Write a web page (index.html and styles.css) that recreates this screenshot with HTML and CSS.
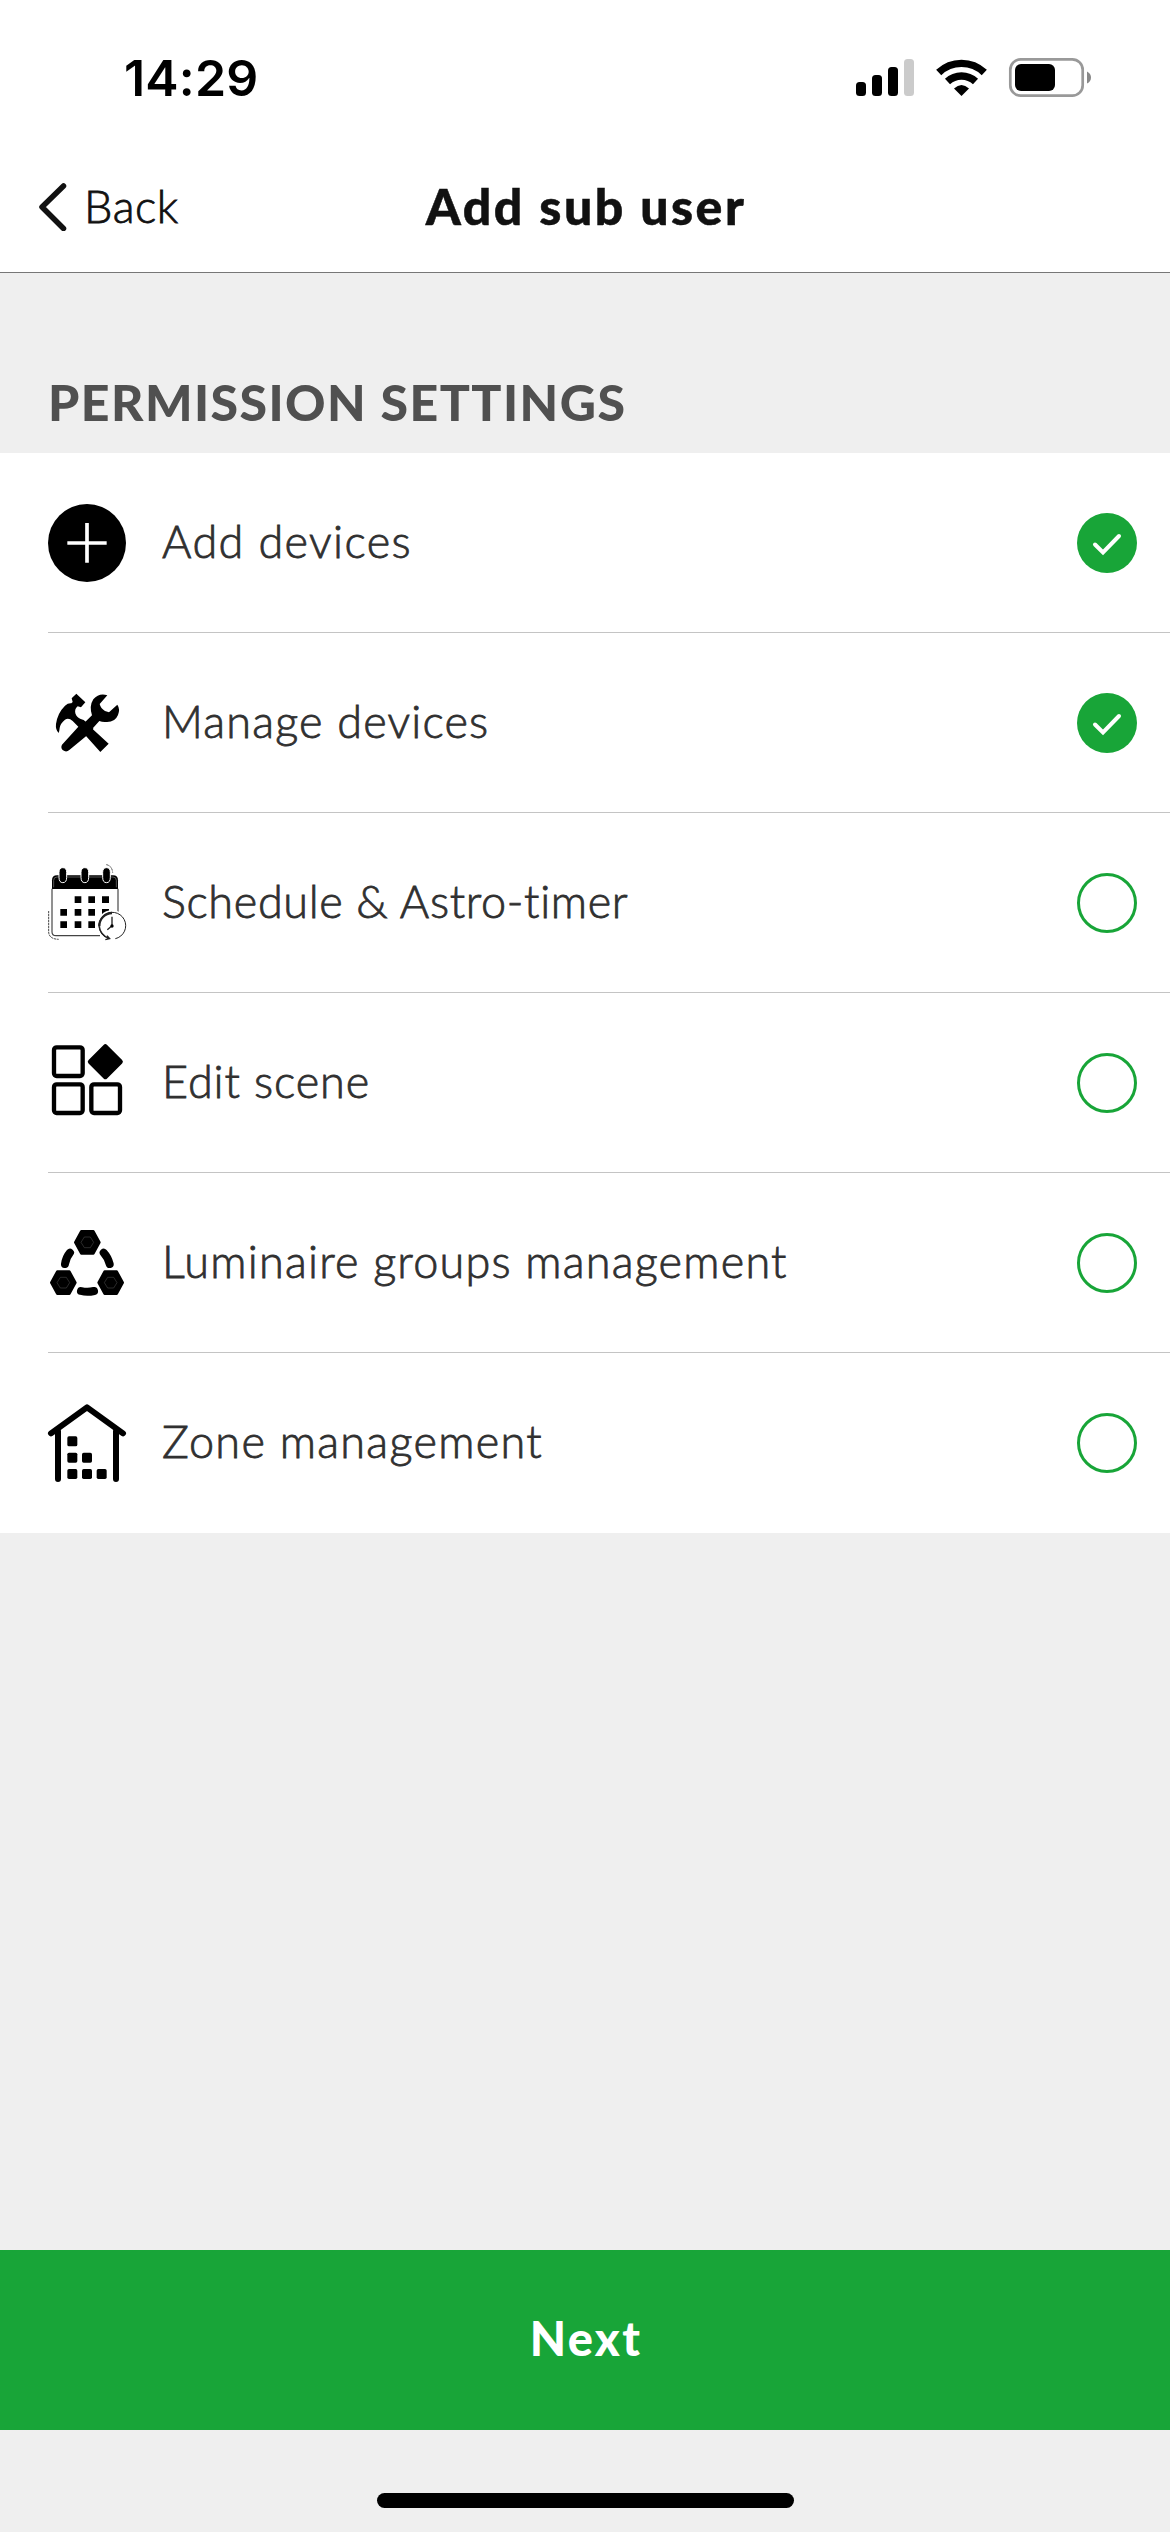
FILE: index.html
```html
<!DOCTYPE html>
<html lang="en">
<head>
<meta charset="utf-8">
<title>Add sub user</title>
<link rel="stylesheet" href="styles.css">
</head>
<body>
<div class="screen">
  <div class="status">
    <span class="time">14:29</span>
    <svg class="indicators" viewBox="0 0 240 42">
      <rect x="0" y="25" width="10" height="14" rx="3.5"/>
      <rect x="16" y="18" width="10" height="21" rx="3.5"/>
      <rect x="32" y="10" width="10" height="29" rx="3.5"/>
      <rect x="48" y="2" width="10" height="37" rx="3.5" fill="#cbcbcb"/>
      <g fill="none" stroke="#000" stroke-width="7.4">
        <path d="M82.700 15.500A33 33 0 0 1 128.300 15.500"/>
        <path d="M91.500 24.500A20.500 20.500 0 0 1 119.500 24.500"/>
      </g>
      <path d="M98 31.500Q105.500 24.500 113 31.500L105.500 39Z"/>
      <rect x="154.300" y="2.300" width="72.400" height="36.400" rx="10.500" fill="none" stroke="#999" stroke-width="2.700"/>
      <rect x="159" y="7" width="40" height="27" rx="6"/>
      <path d="M231 14.500Q235 16.500 235 20.500T231 26.500Z" fill="#888"/>
    </svg>
  </div>

  <header class="nav">
    <a class="back">
      <svg class="chevron" viewBox="0 0 28 48"><path d="M24.500 3L3 24L24.500 45.500"/></svg>
      <span class="back-label">Back</span>
    </a>
    <h1 class="title">Add sub user</h1>
  </header>

  <main class="content">
    <h2 class="section">PERMISSION SETTINGS</h2>
    <ul class="list">
      <li class="row">
        <svg class="icon" viewBox="54 42 234 234">
          <circle cx="171" cy="159" r="117"/>
          <path d="M171 99V218M112 159H230" stroke="#fff" stroke-width="11"/>
        </svg>
        <div class="cell"><span class="label add">Add devices</span>
          <svg class="check" viewBox="0 0 60 60"><circle cx="30" cy="30" r="30"/><path d="M18 31.500L26 39.500L42 23"/></svg></div>
      </li>
      <li class="row">
        <svg class="icon" viewBox="54 42 234 234">
          <path d="M139 71L166 97L153 112L143 109Q133 117 136 130Q140 143 152 147L161 150L190 175L188 182L118 240Q109 248 99 241Q91 234 96 224L145 170L128 153Q116 142 105 149Q91 160 89 174Q88 184 86 189Q76 179 78 162Q82 130 105 107Q114 99 124 100L128 96L125 85Z"/>
          <path d="M232 76L209 102Q212 115 225 123L237 127L262 104Q271 117 264 135Q255 157 229 156Q217 157 208 153L187 176L236 221L211 246L168 198L151 170L186 136Q177 108 190 88Q207 68 232 76Z"/>
        </svg>
        <div class="cell"><span class="label manage">Manage devices</span>
          <svg class="check" viewBox="0 0 60 60"><circle cx="30" cy="30" r="30"/><path d="M18 31.500L26 39.500L42 23"/></svg></div>
      </li>
      <li class="row">
        <svg class="icon" viewBox="54 42 234 234">
          <path d="M66 117V91Q66 76 81 76H249Q264 76 264 91V117Z"/>
          <path d="M71 112V91Q71 81 81 81H249Q259 81 259 91V112" fill="none" stroke="#aaa" stroke-width="1.500"/>
          <path d="M66 116V246Q66 257 78 257H210M264 116V186" fill="none" stroke="#444" stroke-width="3.500"/>
          <g stroke="#fff" stroke-width="3">
            <path d="M87 67Q87 53 98.500 53T110 67V82Q110 98 98.500 98T87 82Z"/>
            <path d="M153 67Q153 53 164.500 53T176 67V82Q176 98 164.500 98T153 82Z"/>
            <path d="M218 67Q218 53 229.500 53T241 67V82Q241 98 229.500 98T218 82Z"/>
          </g>
          <path d="M134 139h20v20h-20zM175 139h20v20h-20zM216 139h21v20h-21zM91 177h20v20H91zM134 177h20v20h-20zM175 177h20v20h-20zM216 177h21v20h-21zM91 214h20v20H91zM134 214h20v20h-20zM175 214h20v20h-20z"/>
          <g fill="none" stroke="#222" stroke-width="2.500">
            <path d="M56 183V246Q57 267 86 268" stroke-dasharray="7 2"/>
            <path d="M229 44Q246 47 248 68" stroke-dasharray="7 3"/>
          </g>
          <circle cx="246" cy="227" r="46" fill="#fff"/>
          <g fill="none" stroke="#222">
            <path d="M256 266A40 40 0 1 0 226 261" stroke-width="3"/>
            <path d="M246 189A39 39 0 0 0 208 229" stroke-width="7"/>
            <path d="M208 229Q210 253 237 266M226 269L239 266L231 257" stroke-width="4"/>
            <path d="M246 200V227L232 239" stroke-width="4"/>
          </g>
          <circle cx="246" cy="228" r="5"/>
        </svg>
        <div class="cell"><span class="label schedule">Schedule &amp; Astro-timer</span><span class="radio"></span></div>
      </li>
      <li class="row">
        <svg class="icon" viewBox="54 42 234 234">
          <g fill="none" stroke="#000" stroke-width="13">
            <rect x="72" y="52" width="86" height="86" rx="8"/>
            <rect x="72" y="163" width="86" height="86" rx="8"/>
            <rect x="184" y="163" width="86" height="86" rx="8"/>
          </g>
          <path d="M226 50L271 95L226 140L181 95Z" stroke="#000" stroke-width="15" stroke-linejoin="round"/>
        </svg>
        <div class="cell"><span class="label edit">Edit scene</span><span class="radio"></span></div>
      </li>
      <li class="row">
        <svg class="icon" viewBox="54 42 234 234">
          <g stroke="#000" stroke-width="8" stroke-linejoin="round">
            <path d="M154 64H190L208 97L190 130H154L136 97Z"/>
            <path d="M82 185H118L136 218L118 251H82L64 218Z"/>
            <path d="M224 185H260L278 218L260 251H224L206 218Z"/>
          </g>
          <g fill="none" stroke="#555" stroke-width="1.500">
            <path d="M163 81H181L191 97L181 113H163L153 97Z"/>
            <path d="M91 202H109L119 218L109 234H91L81 218Z"/>
            <path d="M233 202H251L261 218L251 234H233L223 218Z"/>
          </g>
          <path d="M120 128Q108 142 105 162M221 128Q234 142 239 162M153 243Q172 248 192 243" fill="none" stroke="#000" stroke-width="24" stroke-linecap="round"/>
        </svg>
        <div class="cell"><span class="label groups">Luminaire groups management</span><span class="radio"></span></div>
      </li>
      <li class="row">
        <svg class="icon" viewBox="54 42 234 234">
          <path d="M63 130L171 52L279 130M84 124V267M258 124V267" fill="none" stroke="#000" stroke-width="18" stroke-linecap="round" stroke-linejoin="round"/>
          <rect x="112" y="139" width="30" height="30" rx="5"/>
          <rect x="112" y="188" width="30" height="30" rx="5"/><rect x="156" y="188" width="30" height="30" rx="5"/>
          <rect x="112" y="237" width="30" height="30" rx="5"/><rect x="156" y="237" width="30" height="30" rx="5"/><rect x="200" y="237" width="30" height="30" rx="5"/>
        </svg>
        <div class="cell"><span class="label zone">Zone management</span><span class="radio"></span></div>
      </li>
    </ul>
  </main>

  <button class="next">Next</button>
  <footer class="home"><div class="home-bar"></div></footer>
</div>
</body>
</html>
```
FILE: styles.css
```css
* { box-sizing: border-box; margin: 0; padding: 0; }
body { background: #efefef; font-family: Lato, "Open Sans", sans-serif; font-variant-ligatures: none; }
.screen { width: 1170px; height: 2532px; display: flex; flex-direction: column; background: #efefef; overflow: hidden; }

.status { height: 142px; background: #fff; display: flex; justify-content: space-between; align-items: flex-start; padding: 57px 74px 0 124px; }
.time { font: 600 50px/42px Inter, sans-serif; letter-spacing: 0.2px; color: #000; }
.indicators { width: 240px; height: 42px; }

.nav { height: 131px; background: #fff; border-bottom: 1px solid #777; display: grid; grid-template-columns: 1fr auto 1fr; align-items: center; color: #111; }
.back { display: flex; align-items: center; padding-left: 39px; gap: 17px; }
.chevron { width: 28px; height: 48px; fill: none; stroke: #111; stroke-width: 5.5; stroke-linecap: round; stroke-linejoin: round; }
.back-label { font-size: 45px; font-weight: 300; line-height: 54px; letter-spacing: 0.6px; padding-bottom: 3px; -webkit-text-stroke: 0.8px #111; }
.title { font-size: 50px; font-weight: 900; line-height: 60px; letter-spacing: 2.5px; padding: 0 0 3px 2px; -webkit-text-stroke: 0.5px #111; }

.content { flex: 1; }
.section { height: 180px; padding: 99px 48px 0; font-size: 50px; line-height: 60px; font-weight: 900; letter-spacing: 1.45px; color: #505050; white-space: nowrap; }
.list { list-style: none; background: #fff; }
.row { height: 180px; padding-left: 48px; display: flex; align-items: center; gap: 36px; }
.row:not(:last-child) { background: linear-gradient(#c4c4c4, #c4c4c4) 48px 179px / 100% 1px no-repeat; }
.icon { width: 78px; height: 78px; flex: none; overflow: visible; }
.cell { flex: 1; height: 180px; display: flex; align-items: center; justify-content: space-between; padding-right: 33px; }
.label { font-size: 45px; line-height: 54px; font-weight: 300; color: #303030; white-space: nowrap; padding-bottom: 4px; -webkit-text-stroke: 0.8px #303030; }
.add { letter-spacing: 1.4px; }
.manage { letter-spacing: 1.2px; }
.schedule { letter-spacing: 0.65px; }
.edit { letter-spacing: 0.9px; }
.groups { letter-spacing: 1.22px; }
.zone { letter-spacing: 1.3px; }
.check { width: 60px; height: 60px; fill: #18a538; }
.check path { fill: none; stroke: #fff; stroke-width: 4; stroke-linecap: round; }
.radio { width: 60px; height: 60px; border: 3px solid #18a538; border-radius: 50%; }

.next { height: 180px; border: 0; background: #18a538; color: #fff; font: 900 47px/60px Lato, sans-serif; letter-spacing: 2.3px; padding: 0 0 4px 2px; }
.home { height: 102px; display: flex; justify-content: center; padding-top: 63px; }
.home-bar { width: 417px; height: 15px; border-radius: 8px; background: #000; }
```
